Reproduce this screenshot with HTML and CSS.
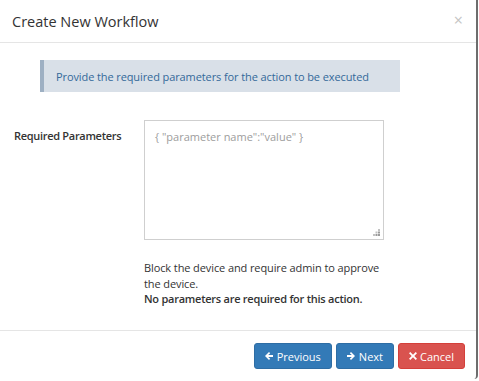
FILE: index.html
```html
<!DOCTYPE html>
<html>
<head>
<meta charset="utf-8">
<link rel="stylesheet" href="styles.css">
</head>
<body>
<div class="modal">
  <div class="modal-header">
    <h4 class="modal-title">Create New Workflow</h4>
    <span class="close">×</span>
  </div>
  <div class="modal-body">
    <div class="alert">Provide the required parameters for the action to be executed</div>
    <div class="form-row">
      <label class="form-label">Required Parameters</label>
      <div class="form-field">
        <div class="textarea">
          <span class="placeholder">{ "parameter name":"value" }</span>
          <svg class="grip" width="7" height="7" viewBox="0 0 7 7"><g fill="#9a9a9a"><rect x="5" y="0" width="2" height="2" opacity=".6"/><rect x="2.5" y="2.5" width="2" height="2" opacity=".6"/><rect x="5" y="2.5" width="2" height="2"/><rect x="0" y="5" width="2" height="2" opacity=".6"/><rect x="2.5" y="5" width="2" height="2"/><rect x="5" y="5" width="2" height="2"/></g></svg>
        </div>
        <p class="help">Block the device and require admin to approve<br>the device.<br><strong>No parameters are required for this action.</strong></p>
      </div>
    </div>
  </div>
  <div class="modal-footer">
    <button class="btn btn-primary"><svg class="ico" width="8" height="8" viewBox="0 0 8 8"><path d="M0 4 L4 0 L5.2 1.2 L3.2 3.1 H8 V4.9 H3.2 L5.2 6.8 L4 8 Z" fill="#fff"/></svg>Previous</button>
    <button class="btn btn-primary"><svg class="ico" width="8" height="8" viewBox="0 0 8 8"><path d="M8 4 L4 0 L2.8 1.2 L4.8 3.1 H0 V4.9 H4.8 L2.8 6.8 L4 8 Z" fill="#fff"/></svg>Next</button>
    <button class="btn btn-danger"><svg class="ico" width="8" height="8" viewBox="0 0 8 8"><path d="M1.3 0 L4 2.7 L6.7 0 L8 1.3 L5.3 4 L8 6.7 L6.7 8 L4 5.3 L1.3 8 L0 6.7 L2.7 4 L0 1.3 Z" fill="#fff"/></svg>Cancel</button>
  </div>
</div>
</body>
</html>
```

FILE: styles.css
```css
html, body {
  margin: 0;
  padding: 0;
  background: #fff;
}
body {
  font-family: "Open Sans", "Noto Sans", sans-serif;
  font-size: 11px;
  color: #333;
}
.modal {
  width: 476px;
  height: 379px;
  border-right: 2px solid #6d6d6d;
  border-bottom-right-radius: 4px;
  background: #fff;
  display: flex;
  flex-direction: column;
}
.modal-header {
  height: 43px;
  border-bottom: 1px solid #e5e5e5;
  display: flex;
  align-items: center;
  justify-content: space-between;
  padding: 0 13px 0 12px;
  box-sizing: border-box;
}
.modal-title {
  margin: 0;
  font-size: 14.5px;
  font-weight: 400;
  color: #333;
  padding-top: 1px;
}
.close {
  font-size: 16px;
  color: #c4c4c4;
  line-height: 1;
  margin-top: -2px;
}
.modal-body {
  flex: 1;
  padding: 17px 0 0 0;
}
.alert {
  margin-left: 40px;
  width: 344px;
  height: 32px;
  background: #d9e0e8;
  border-left: 4px solid #9eb0c3;
  color: #34699a;
  display: flex;
  align-items: center;
  padding-left: 12px;
  letter-spacing: -0.1px;
  box-sizing: content-box;
}
.form-row {
  display: flex;
  margin-top: 28px;
}
.form-label {
  width: 130px;
  padding-left: 14px;
  padding-top: 8px;
  font-weight: 600;
  letter-spacing: -0.3px;
  color: #333;
  line-height: 15px;
}
.form-field {
  width: 240px;
}
.textarea {
  position: relative;
  width: 240px;
  height: 120px;
  border: 1px solid #cfcfcf;
  box-sizing: border-box;
  padding: 8px 10px;
}
.placeholder {
  color: #9d9d9d;
  line-height: 15px;
}
.grip {
  position: absolute;
  right: 3px;
  bottom: 3px;
}
.help {
  margin: 20px 0 0 0;
  line-height: 15.5px;
  color: #333;
  white-space: nowrap;
  letter-spacing: -0.1px;
}
.help strong {
  font-weight: 600;
  letter-spacing: -0.25px;
}
.modal-footer {
  border-top: 1px solid #e5e5e5;
  height: 49px;
  display: flex;
  justify-content: flex-end;
  align-items: flex-start;
  gap: 4px;
  padding: 12px 11px 0 0;
  box-sizing: border-box;
}
.btn {
  font-family: inherit;
  font-size: 11px;
  height: 26px;
  border-radius: 3px;
  border: 1px solid transparent;
  color: #fff;
  padding: 0 10px;
  display: flex;
  align-items: center;
  gap: 4px;
  cursor: pointer;
}
.btn-primary {
  background: #337ab7;
  border-color: #2e6da4;
}
.btn-danger {
  background: #d9534f;
  border-color: #d43f3a;
  gap: 3px;
}
.ico {
  display: block;
}
```
